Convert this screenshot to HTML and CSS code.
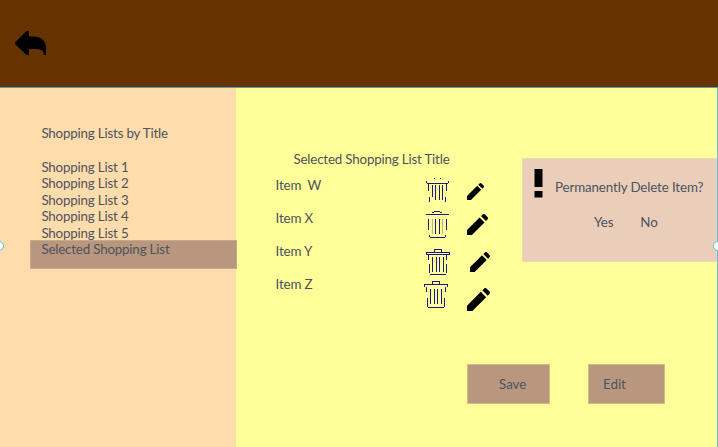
FILE: index.html
```html
<!DOCTYPE html>
<html lang="en">
<head>
<meta charset="utf-8">
<title>Shopping Lists</title>
<link rel="stylesheet" href="styles.css">
</head>
<body>
<svg class="defs" width="0" height="0">
  <symbol id="pencil" viewBox="3 3 18 18"><path d="M3 16.800V21h4.200L18 10.200l-4.200-4.200L3 16.800zM20.500 7.700a1.500 1.500 0 0 0 0-2.100l-2.100-2.100a1.500 1.500 0 0 0-2.100 0l-1.300 1.300 4.200 4.200 1.300-1.300z"/></symbol>
</svg>
<header class="header">
  <svg class="back" width="31" height="24" viewBox="0 0 31 24"><path d="M0 11.500L11.500 0H14V5.500H19Q31 6.500 31 17V24H29Q28.500 18 22 18H14V24H11.500L0 13Z"/></svg>
</header>
<div class="body">
  <nav class="sidebar">
    <h2>Shopping Lists by Title</h2>
    <ul>
      <li>Shopping List 1</li>
      <li>Shopping List 2</li>
      <li>Shopping List 3</li>
      <li>Shopping List 4</li>
      <li>Shopping List 5</li>
      <li class="selected">Selected Shopping List</li>
    </ul>
  </nav>
  <main class="main">
    <div class="top">
      <section class="list">
        <h1>Selected Shopping List Title</h1>
        <div class="row">
          <span>Item&nbsp; W</span>
          <svg class="trash" width="27" height="33" viewBox="424 177 27 33"><path d="M434 178.500h1M440 178.500h1M426.500 181v2M448.500 181v2M427 183.500h21M428.500 184v7M446.500 184v7M429.500 197v5M445.500 197v5M432.500 185v12M435.500 185v15M439.500 185v15M442.500 185v15"/></svg>
          <svg class="pen" width="26" height="33"><use href="#pencil" x="1" y="6" width="17" height="17"/></svg>
        </div>
        <div class="row">
          <span>Item X</span>
          <svg class="trash" width="27" height="33" viewBox="424 210 27 33"><path d="M434 211.500h6M432 212.500h2M440 212.500h2M426 214.500h23M428.500 219v11M446.500 219v11M435.500 219v15M439.500 219v15M430 237.500h15M429.500 235v2M445.500 235v2"/><path class="faint" d="M432.500 219v15M442.500 219v15"/></svg>
          <svg class="pen" width="26" height="33"><use href="#pencil" x="1" y="4" width="21" height="21"/></svg>
        </div>
        <div class="row">
          <span>Item Y</span>
          <svg class="trash" width="27" height="33" viewBox="424 243 27 33"><path d="M434.500 252v-2.500h7v2.500M426.500 252.500h23v1.500h-23zM428.500 254v6M446.500 254v6M429.500 264v9M446.500 264v9M430 274.500h16M432.500 257v15M436.500 257v15M439.500 257v15M443.500 257v15"/></svg>
          <svg class="pen" width="26" height="33"><use href="#pencil" x="4" y="9" width="20" height="20"/></svg>
        </div>
        <div class="row">
          <span>Item Z</span>
          <svg class="trash" width="27" height="33" viewBox="424 276 27 33"><path d="M432.500 284v-2.500h7v2.500M424.500 287v-2.500h23v2.500M426.500 287v5M445.500 287v5M427.500 298v9M444.500 298v9M428 307.500h16M430.500 289v15M434.500 289v15M437.500 289v15M441.500 289v15"/></svg>
          <svg class="pen" width="26" height="33"><use href="#pencil" x="1" y="12" width="23" height="23"/></svg>
        </div>
      </section>
      <aside class="dialog">
        <div class="question">
          <svg width="9" height="29" viewBox="0 0 9 29"><path d="M.5 0h8v18h-8zM.5 22h8v6.500h-8z"/></svg>
          <span>Permanently Delete Item?</span>
        </div>
        <div class="answers"><span>Yes</span><span>No</span></div>
      </aside>
    </div>
    <div class="actions">
      <div class="btn save">Save</div>
      <div class="btn edit">Edit</div>
    </div>
  </main>
  <i class="handle left"></i>
  <i class="handle right"></i>
</div>
</body>
</html>
```
FILE: styles.css
```css
* { box-sizing: border-box; margin: 0; padding: 0; }
body {
  width: 718px;
  height: 447px;
  overflow: hidden;
  font: 13.33px/16.4px Lato, sans-serif;
  letter-spacing: -0.18px;
  color: #4c535e;
  background: #ff9;
}
h1, h2 { font-size: inherit; font-weight: 400; }
ul { list-style: none; }
svg { display: block; }
.defs { position: absolute; }
.header {
  height: 88px;
  padding: 31px 0 0 15px;
  background: #630;
  border-bottom: 1px solid #4f9fbd;
}
.body {
  position: relative;
  display: flex;
  height: 359px;
  border-right: 1px solid #5fc3e8;
}
.sidebar { width: 236px; padding: 37px 0 0 30px; background: #ffdcab; }
.sidebar h2 { margin: 0 0 17.600px 11.400px; }
.sidebar li { padding-left: 11.400px; }
.sidebar .selected {
  width: 207px;
  height: 29px;
  padding-left: 10.400px;
  background: #b9977e;
  border: 1px solid #caa888;
  line-height: 16px;
  margin-top: -1.500px;
}
.main { flex: 1; padding: 63px 0 0 1px; }
.top { display: flex; justify-content: space-between; }
.list { width: 256px; padding-left: 39px; }
.list h1 { height: 26px; padding-left: 17.500px; white-space: nowrap; }
.row { display: flex; height: 33px; }
.row span { width: 148px; margin-left: -0.400px; margin-right: 0.400px; }
.row .trash { margin-right: 15px; flex: none; }
.row .pen { flex: none; overflow: visible; }
.trash path { fill: none; stroke: #1c1784; stroke-width: 1; shape-rendering: crispEdges; }
.trash .faint { stroke: #b9b58b; }
.dialog {
  width: 195px;
  height: 104px;
  margin-top: 7px;
  padding: 10px 0 0 11px;
  background: #ebceb9;
  border: 1px solid #efd9b3;
  border-right: 0;
  letter-spacing: -0.12px;
}
.question { display: flex; gap: 12px; white-space: nowrap; }
.question span { padding-top: 10px; }
.answers { display: flex; gap: 27px; padding: 16px 0 0 60px; }
.actions { display: flex; gap: 38px; padding: 55px 0 0 230px; }
.btn {
  height: 40px;
  background: #b9977e;
  border: 1px solid #d2ba80;
  line-height: 38px;
  letter-spacing: 0;
}
.save { width: 83px; padding-left: 31px; }
.edit { width: 77px; padding-left: 14px; }
.handle {
  position: absolute;
  top: 153px;
  width: 10px;
  height: 10px;
  border: 1px solid #56bff0;
  border-radius: 50%;
  background: #fff;
}
.left { left: -6px; }
.right { right: -6px; }
```
